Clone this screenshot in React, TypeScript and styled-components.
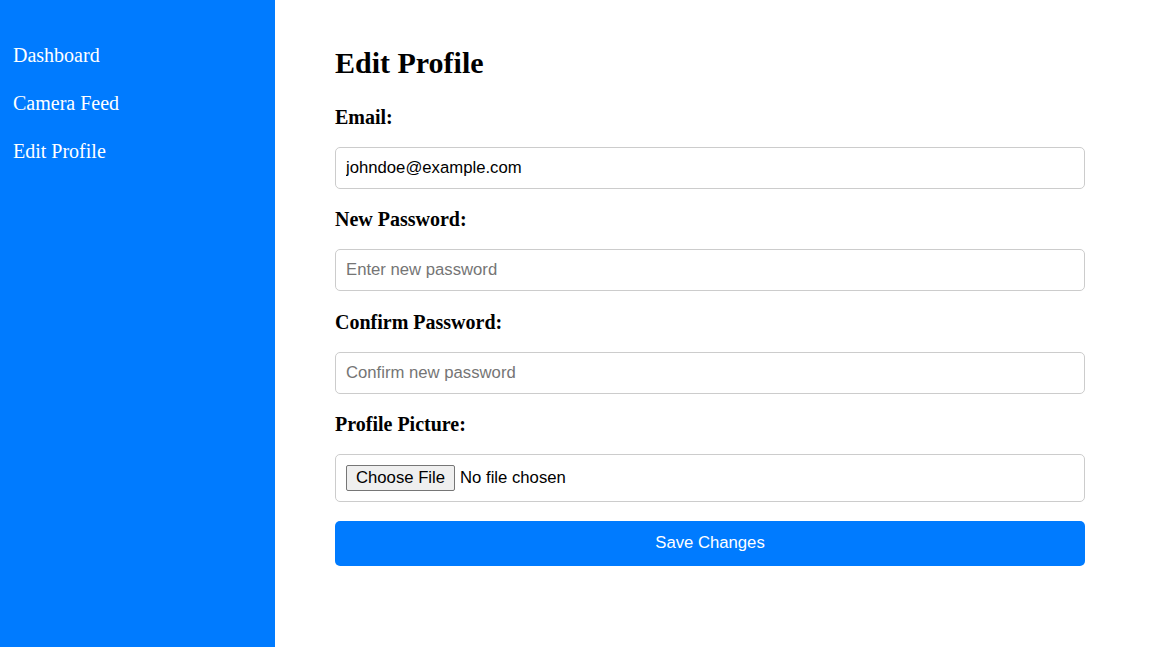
import React from "react";
import styled, { createGlobalStyle } from "styled-components";

const GlobalStyle = createGlobalStyle`
  html, body {
    margin: 0;
    padding: 0;
    background: #ffffff;
  }
  body {
    font-family: "Liberation Serif", "Times New Roman", serif;
    font-size: 20px;
    color: #000;
  }
  * { box-sizing: border-box; }
`;

const Layout = styled.div`
  display: flex;
  min-height: 647px;
`;

const Sidebar = styled.nav`
  width: 275px;
  flex-shrink: 0;
  background: #007bff;
  padding: 44px 13px 0 13px;
  display: flex;
  flex-direction: column;
  gap: 25px;
`;

const NavLink = styled.a`
  color: #ffffff;
  text-decoration: none;
  font-family: "Liberation Serif", "Times New Roman", serif;
  font-size: 20px;
  line-height: 23px;
  cursor: pointer;
`;

const Main = styled.main`
  flex: 1;
  padding: 46px 0 0 60px;
`;

const Form = styled.form`
  width: 750px;
  display: flex;
  flex-direction: column;
`;

const Title = styled.h2`
  margin: 0 0 26px 0;
  font-family: "Liberation Serif", "Times New Roman", serif;
  font-size: 30px;
  line-height: 34px;
  font-weight: bold;
`;

const Label = styled.label`
  display: block;
  font-family: "Liberation Serif", "Times New Roman", serif;
  font-size: 20px;
  line-height: 23px;
  font-weight: bold;
  margin-bottom: 18px;
`;

const TextInput = styled.input`
  display: block;
  width: 100%;
  height: 42px;
  padding: 0 10px;
  border: 1px solid #cccccc;
  border-radius: 5px;
  font-family: "Liberation Sans", Arial, sans-serif;
  font-size: 16.7px;
  color: #000;
  margin: 0 0 19.3px 0;
  outline: none;
  &::placeholder {
    color: #757575;
  }
`;

const FileInput = styled.input`
  display: block;
  width: 100%;
  height: 48px;
  padding: 10px;
  border: 1px solid #cccccc;
  border-radius: 5px;
  font-family: "Liberation Sans", Arial, sans-serif;
  font-size: 16.7px;
  color: #000;
  margin: 0 0 19px 0;
  &::file-selector-button {
    font-family: "Liberation Sans", Arial, sans-serif;
    font-size: 16.7px;
    height: 26px;
    padding: 0 9px;
    margin-right: 5px;
    background: #efefef;
    border: 1px solid #767676;
    border-radius: 2px;
    color: #000;
  }
`;

const SaveButton = styled.button`
  width: 100%;
  height: 45px;
  border: none;
  border-radius: 5px;
  background: #007bff;
  color: #ffffff;
  font-family: "Liberation Sans", Arial, sans-serif;
  font-size: 16.7px;
  cursor: pointer;
`;

export default function App() {
  return (
    <>
      <GlobalStyle />
      <Layout>
        <Sidebar>
          <NavLink>Dashboard</NavLink>
          <NavLink>Camera Feed</NavLink>
          <NavLink>Edit Profile</NavLink>
        </Sidebar>
        <Main>
          <Form onSubmit={(e) => e.preventDefault()}>
            <Title>Edit Profile</Title>
            <Label htmlFor="email">Email:</Label>
            <TextInput id="email" type="email" defaultValue="johndoe@example.com" />
            <Label htmlFor="pw">New Password:</Label>
            <TextInput id="pw" type="password" placeholder="Enter new password" />
            <Label htmlFor="cpw">Confirm Password:</Label>
            <TextInput id="cpw" type="password" placeholder="Confirm new password" />
            <Label htmlFor="pic">Profile Picture:</Label>
            <FileInput id="pic" type="file" />
            <SaveButton type="submit">Save Changes</SaveButton>
          </Form>
        </Main>
      </Layout>
    </>
  );
}
